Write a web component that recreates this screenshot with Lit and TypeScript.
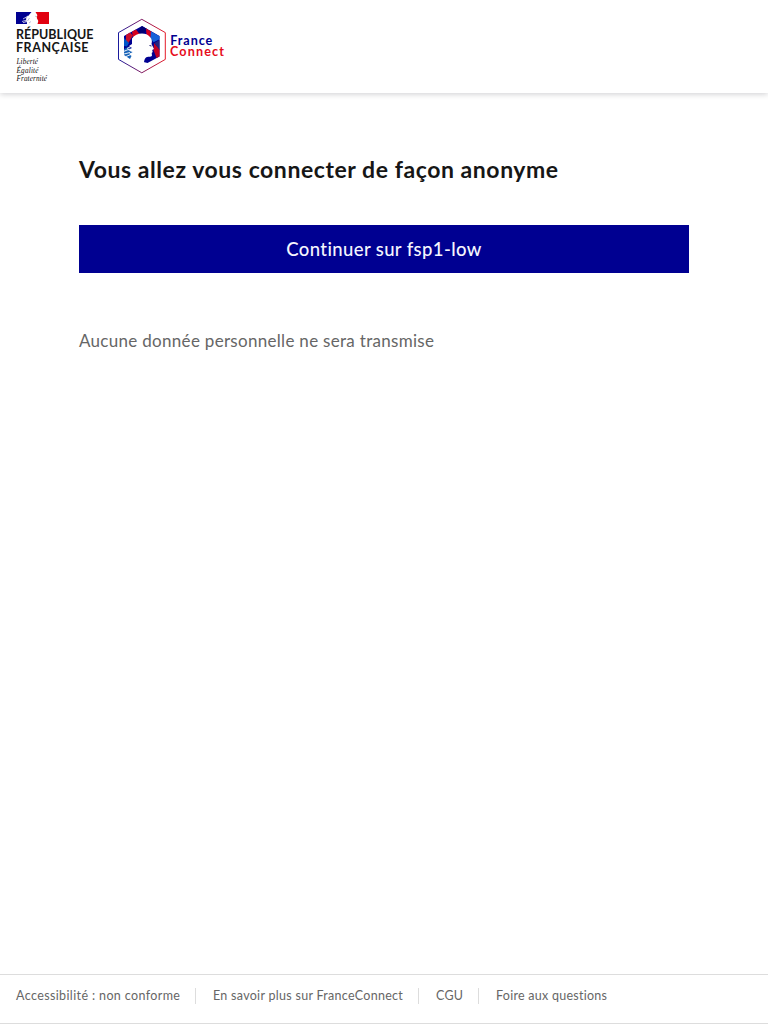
import { LitElement, html, css } from "lit";
import { customElement } from "lit/decorators.js";

@customElement("brand-logos")
class BrandLogos extends LitElement {
  static styles = css`
    :host { display: flex; align-items: flex-start; }
    svg { display: block; }
    .state { margin-left: 16px; }
    .connect { margin-left: 18px; margin-top: 16px; }
    .bold { font-family: Lato, sans-serif; font-weight: 700; }
    .motto { font-family: "Liberation Serif", serif; font-style: italic; font-size: 7.200px; fill: #111; }
  `;
  render() {
    return html`
      <svg class="state" width="84" height="92" viewBox="16 0 84 92" role="img" aria-label="République Française">
        <path d="M16 12h15.500l-2.500 3-2.500 3 .5 6H16z" fill="#000091" />
        <path d="M35.500 12H49v12H37.500l.8-3-1.500-3 .5-3z" fill="#e1000f" />
        <path d="M23 19l5-3-2 2.500 3-.7-3 2.200 2-.2-2.500 1.700M22 21.500l5-1.500M23 22.700l4-1.200" fill="none" stroke="#fff" stroke-width=".7" />
        <path d="M29.500 18l-2 3M31 21.500l-2 1.500" stroke="#7777b8" stroke-width=".5" />
        <path d="M35.500 16.300l1.200.4" stroke="#555" stroke-width=".6" />
        <g class="bold" font-size="12.500" fill="#161616">
          <text x="16" y="39" textLength="77.500">RÉPUBLIQUE</text>
          <text x="16" y="52" textLength="72.500">FRANÇAISE</text>
        </g>
        <g class="motto">
          <text x="16.500" y="64.300" textLength="21.500">Liberté</text>
          <text x="16.500" y="72.700" textLength="22">Égalité</text>
          <text x="16.500" y="81" textLength="30.500">Fraternité</text>
        </g>
      </svg>
      <svg class="connect" width="110" height="60" viewBox="118 16 110 60" role="img" aria-label="FranceConnect">
        <defs>
          <linearGradient id="edge" x1="0" x2="1"><stop offset="0" stop-color="#000091" /><stop offset="1" stop-color="#e1000f" /></linearGradient>
        </defs>
        <path d="M141.800 19.300l23.500 13.300v26.800l-23.500 13.400-23.300-13.400V32.600z" fill="#fff" stroke="url(#edge)" stroke-width=".9" />
        <path d="M142 26l17.500 10v20.500L147.500 63l-4-1-1-5-12-8-6.500 4V36z" fill="#000091" />
        <path d="M126 35l4-2.500 3 3-5 8-2 1z" fill="#c9102c" />
        <path d="M132 31.800l4-2.400 4 5-7 3z" fill="#d5001d" />
        <path d="M124 38l5 5-2 3.500-3-.5z" fill="#0055c8" />
        <path d="M142 26l5 3-4 6-5-3z" fill="#000074" />
        <path d="M146 28.500l5.500 3.200-1 6.300-4-3z" fill="#d5001d" />
        <path d="M151 31.500l8.500 4.800v3l-6 3-3-4z" fill="#1763d8" />
        <path d="M154 43l5.500 6v7.500l-3 1.500-3-8z" fill="#c00024" />
        <path d="M159.500 40v10l-5-7z" fill="#24247e" />
        <path d="M124 49l6-3-1.500 3 4-1-3 3 4 1-4 2 2 2-1.500 3-6-4z" fill="#1763b7" />
        <path d="M132 38.500c4-6 14-6.500 18-1.500 2.500 3 2 5 1.500 7l2.500 5-1.800 1 .5 2-1 1 .3 2.500c-1 2.500-4.500 0-6.500 2.500-1 1-1.500 3-1.500 5l-6 2-8-4 4-6-5-1 4-2-5-2 4-2-3-2 3-2z" fill="#fff" />
        <path d="M123.500 51.500l6-2.500M124 54l6-1.500M126 56.500l5-2M127 48.500l4-2" stroke="#fff" stroke-width=".9" />
        <path d="M149.500 45.500l2 .5" stroke="#00005f" stroke-width=".9" />
        <g class="bold" font-size="12.600">
          <text x="170.300" y="45.100" fill="#000091" textLength="42">France</text>
          <text x="170" y="56.400" fill="#e60c1c" textLength="54">Connect</text>
        </g>
      </svg>
    `;
  }
}

@customElement("app-root")
class AppRoot extends LitElement {
  static styles = css`
    :host {
      display: flex; flex-direction: column; min-height: 100vh; box-sizing: border-box;
      background: #fff; color: #161616; font-family: Lato, "Noto Sans", sans-serif;
      font-variant-ligatures: none;
    }
    header { height: 93px; background: #fff; box-shadow: 0 1px 6px rgba(0,0,18,.2); }
    main { flex: 1; padding: 60px 79px 0; }
    h1 { margin: 0; font-size: 23px; line-height: 32px; font-weight: 700; letter-spacing: .56px; white-space: nowrap; }
    button {
      display: block; width: 100%; height: 48px; margin: 40px 0 0; padding: 0; border: 0; background: #000091;
      color: #f5f5fe; font: 500 18.500px/28px Lato, sans-serif; letter-spacing: .38px;
    }
    p { margin: 56px 0 0; color: #666; font-size: 17px; line-height: 24px; letter-spacing: .3px; }
    footer { height: 50px; box-sizing: border-box; border-top: 1px solid #ddd; border-bottom: 1px solid #ddd; padding: 13px 16px 0; }
    ul { display: flex; margin: 0; padding: 0; list-style: none; }
    li { height: 16px; font-size: 12.500px; line-height: 16px; letter-spacing: .26px; color: #666; white-space: nowrap; box-sizing: border-box; }
    li + li { border-left: 1px solid #ddd; padding-left: 17px; }
    .access { width: 179px; letter-spacing: .38px; }
    .more { width: 223px; letter-spacing: .29px; }
    .terms { width: 60px; }
  `;
  render() {
    return html`
      <header><brand-logos></brand-logos></header>
      <main>
        <h1>Vous allez vous connecter de façon anonyme</h1>
        <button>Continuer sur fsp1-low</button>
        <p>Aucune donnée personnelle ne sera transmise</p>
      </main>
      <footer>
        <ul>
          <li class="access">Accessibilité : non conforme</li>
          <li class="more">En savoir plus sur FranceConnect</li>
          <li class="terms">CGU</li>
          <li>Foire aux questions</li>
        </ul>
      </footer>
    `;
  }
}
